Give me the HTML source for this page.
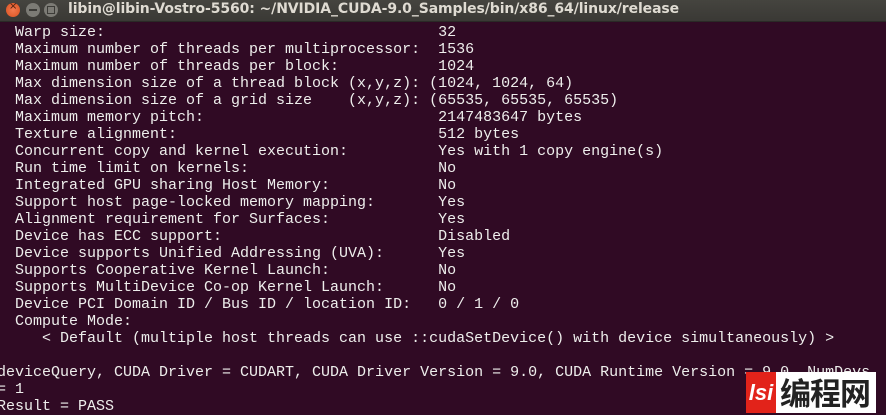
<!DOCTYPE html>
<html><head><meta charset="utf-8"><style>
html,body{margin:0;padding:0;width:886px;height:413px;overflow:hidden;background:#300a24;}
.tb{position:absolute;left:0;top:0;width:886px;height:21px;background:linear-gradient(#45443f,#3a3935);border-bottom:1px solid #2a2926;}
.btn{position:absolute;top:3px;width:14px;height:14px;border-radius:50%;}
.title{position:absolute;left:68px;top:1px;color:#dfdbd2;font:bold 14px "DejaVu Sans","Liberation Sans",sans-serif;white-space:nowrap;letter-spacing:-0.1px}
pre{position:absolute;left:-3px;top:24px;margin:0;color:#eeeeec;font:15px/17px "Liberation Mono",monospace;white-space:pre;}
.wm{position:absolute;left:746px;top:372px;width:130px;height:41px;background:#fff;}
.wm .r{position:absolute;left:0;top:0;width:30px;height:41px;background:#e2231a;color:#fff;font:italic bold 22px "Liberation Sans",sans-serif;text-align:center;line-height:41px}
.wm .t{position:absolute;left:34px;top:1px;font:bold 31px "Noto Sans CJK SC",sans-serif;color:#222;line-height:38px;letter-spacing:-1px}
</style></head><body>
<div class="tb">
<div class="btn" style="left:6px;background:radial-gradient(#f27a4f,#d9501f);"><span style="position:absolute;left:3px;top:-2px;font:10px 'DejaVu Sans';color:#4a1f10">×</span></div>
<div class="btn" style="left:26px;background:#7c7b75;"><span style="position:absolute;left:3px;top:6px;width:8px;height:2px;background:#3c3b37"></span></div>
<div class="btn" style="left:44px;background:#7c7b75;"><span style="position:absolute;left:3px;top:3px;width:6px;height:6px;border:1px solid #3c3b37"></span></div>
<div class="title">libin@libin-Vostro-5560: ~/NVIDIA_CUDA-9.0_Samples/bin/x86_64/linux/release</div>
</div>
<pre>  Warp size:                                     32
  Maximum number of threads per multiprocessor:  1536
  Maximum number of threads per block:           1024
  Max dimension size of a thread block (x,y,z): (1024, 1024, 64)
  Max dimension size of a grid size    (x,y,z): (65535, 65535, 65535)
  Maximum memory pitch:                          2147483647 bytes
  Texture alignment:                             512 bytes
  Concurrent copy and kernel execution:          Yes with 1 copy engine(s)
  Run time limit on kernels:                     No
  Integrated GPU sharing Host Memory:            No
  Support host page-locked memory mapping:       Yes
  Alignment requirement for Surfaces:            Yes
  Device has ECC support:                        Disabled
  Device supports Unified Addressing (UVA):      Yes
  Supports Cooperative Kernel Launch:            No
  Supports MultiDevice Co-op Kernel Launch:      No
  Device PCI Domain ID / Bus ID / location ID:   0 / 1 / 0
  Compute Mode:
     &lt; Default (multiple host threads can use ::cudaSetDevice() with device simultaneously) &gt;

deviceQuery, CUDA Driver = CUDART, CUDA Driver Version = 9.0, CUDA Runtime Version = 9.0, NumDevs
= 1
Result = PASS</pre>
<div class="wm"><div class="r">lsi</div><div class="t">编程网</div></div>
</body></html>
